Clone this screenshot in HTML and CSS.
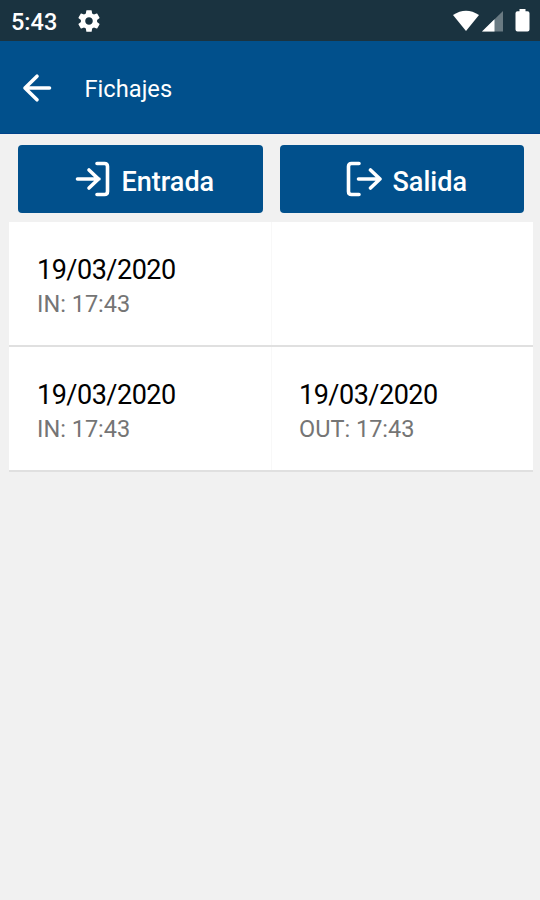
FILE: index.html
```html
<!DOCTYPE html>
<html lang="es">
<head>
  <meta charset="UTF-8">
  <meta name="viewport" content="width=device-width, initial-scale=1.0">
  <title>Fichajes</title>
  <link rel="stylesheet" href="styles.css">
</head>
<body>
  <!-- Barra de estado -->
  <div class="estado">
    <span class="hora">5:43</span>
    <svg class="ajustes" width="26" height="26" viewBox="0 0 24 24" fill="#fff"><path d="M19.43 12.98c.04-.32.07-.64.07-.98s-.03-.66-.07-.98l2.11-1.65c.19-.15.24-.42.12-.64l-2-3.46c-.12-.22-.39-.3-.61-.22l-2.49 1c-.52-.4-1.08-.73-1.69-.98l-.38-2.65C14.46 2.18 14.25 2 14 2h-4c-.25 0-.46.18-.49.42l-.38 2.65c-.61.25-1.17.59-1.69.98l-2.49-1c-.23-.09-.49 0-.61.22l-2 3.46c-.13.22-.07.49.12.64l2.11 1.65c-.04.32-.07.65-.07.98s.03.66.07.98l-2.11 1.65c-.19.15-.24.42-.12.64l2 3.46c.12.22.39.3.61.22l2.49-1c.52.4 1.08.73 1.69.98l.38 2.65c.03.24.24.42.49.42h4c.25 0 .46-.18.49-.42l.38-2.65c.61-.25 1.17-.59 1.69-.98l2.49 1c.23.09.49 0 .61-.22l2-3.46c.12-.22.07-.49-.12-.64l-2.11-1.65zM12 15.500c-1.930 0-3.500-1.570-3.500-3.500s1.570-3.500 3.500-3.500 3.500 1.570 3.500 3.500-1.570 3.500-3.500 3.500z"/></svg>
    <svg class="iconos" width="80" height="26" viewBox="0 0 80 26">
      <path d="M0 6Q13-2.500 26 6L13 22z" fill="#fff"/>
      <path d="M29 22.500L50 2V22.500z" fill="#fff" fill-opacity=".35"/>
      <path d="M29 22.500L41.500 10.300V22.500z" fill="#fff"/>
      <path d="M66.500 0h6v2.200h2a2 2 0 0 1 2 2V20.500a2 2 0 0 1-2 2H64.500a2 2 0 0 1-2-2V4.200a2 2 0 0 1 2-2h2z" fill="#fff"/>
    </svg>
  </div>

  <!-- Cabecera -->
  <header class="cabecera">
    <svg class="volver" width="30" height="30" viewBox="0 0 30 30"><path d="M27.500 15H3M15 3.200L3 15l12 11.800"/></svg>
    <h1>Fichajes</h1>
  </header>

  <!-- Botones -->
  <div class="botones">
    <button class="boton entrada">
      <svg width="36" height="36" viewBox="0 0 36 36"><path d="M2.500 18H24M14 9l9.500 9-9.500 9M22 2.500h7.500q3 0 3 3v25q0 3-3 3H22"/></svg>
      <span>Entrada</span>
    </button>
    <button class="boton salida">
      <svg width="36" height="36" viewBox="0 0 36 36"><path d="M13 2.500H5.500q-3 0-3 3v25q0 3 3 3H13M12.500 18H34M24.500 9l9.500 9-9.500 9"/></svg>
      <span>Salida</span>
    </button>
  </div>

  <!-- Lista de fichajes -->
  <div class="lista">
    <div class="fila">
      <div class="celda">
        <div class="fecha">19/03/2020</div>
        <div class="detalle">IN: 17:43</div>
      </div>
      <div class="celda"></div>
    </div>
    <div class="fila">
      <div class="celda">
        <div class="fecha">19/03/2020</div>
        <div class="detalle">IN: 17:43</div>
      </div>
      <div class="celda">
        <div class="fecha">19/03/2020</div>
        <div class="detalle">OUT: 17:43</div>
      </div>
    </div>
  </div>
</body>
</html>
```

FILE: styles.css
```css
* {
  box-sizing: border-box;
}

body {
  margin: 0;
  min-height: 100vh;
  font-family: Roboto, sans-serif;
  background: #f1f1f1;
  color: #000;
}

.estado {
  display: flex;
  align-items: center;
  height: 41px;
  padding: 2px 11px 0;
  background: #1a3340;
  color: #fff;
}

.hora {
  width: 64.5px;
  font-size: 23.5px;
  font-weight: 500;
}

.ajustes {
  margin-bottom: 1px;
}

.iconos {
  margin-left: auto;
  margin-right: -4px;
}

.cabecera {
  display: flex;
  align-items: center;
  height: 93px;
  padding-left: 22px;
  background: #01508c;
  border-bottom: 1px solid #00438a;
  color: #fff;
}

.volver {
  margin-top: 1px;
  fill: none;
  stroke: #fff;
  stroke-width: 3.6;
  stroke-linecap: round;
  stroke-linejoin: round;
}

.cabecera h1 {
  margin: 3px 0 0 32.5px;
  font-size: 23.7px;
  font-weight: 400;
}

.botones {
  display: grid;
  grid-template-columns: 245px 244px;
  gap: 17px;
  padding: 11px 17px 9px 17.5px;
}

.boton {
  display: flex;
  align-items: center;
  height: 68px;
  padding: 0;
  border: none;
  border-radius: 4px;
  background: #01508c;
  color: #fff;
  font-family: inherit;
  font-size: 27px;
  font-weight: 500;
}

.boton svg {
  fill: none;
  stroke: #fff;
  stroke-width: 3.6;
  stroke-linecap: round;
  stroke-linejoin: round;
}

.boton span {
  padding-top: 5px;
}

.entrada {
  gap: 10.5px;
  padding-left: 57.5px;
}

.salida {
  gap: 10.5px;
  padding-left: 66.5px;
}

.lista {
  margin: 0 7px 0 9px;
}

.fila {
  display: grid;
  grid-template-columns: 1fr 1fr;
  height: 125px;
  background: #fff;
  border-bottom: 2px solid #e0e0e0;
}

.celda {
  padding: 32px 28px 0;
}

.celda + .celda {
  padding-left: 27px;
  border-left: 1px solid #f8f8f8;
}

.fecha {
  font-size: 27px;
  line-height: 32px;
  letter-spacing: -0.5px;
}

.detalle {
  font-size: 23.5px;
  line-height: 36px;
  color: #757575;
}
```
